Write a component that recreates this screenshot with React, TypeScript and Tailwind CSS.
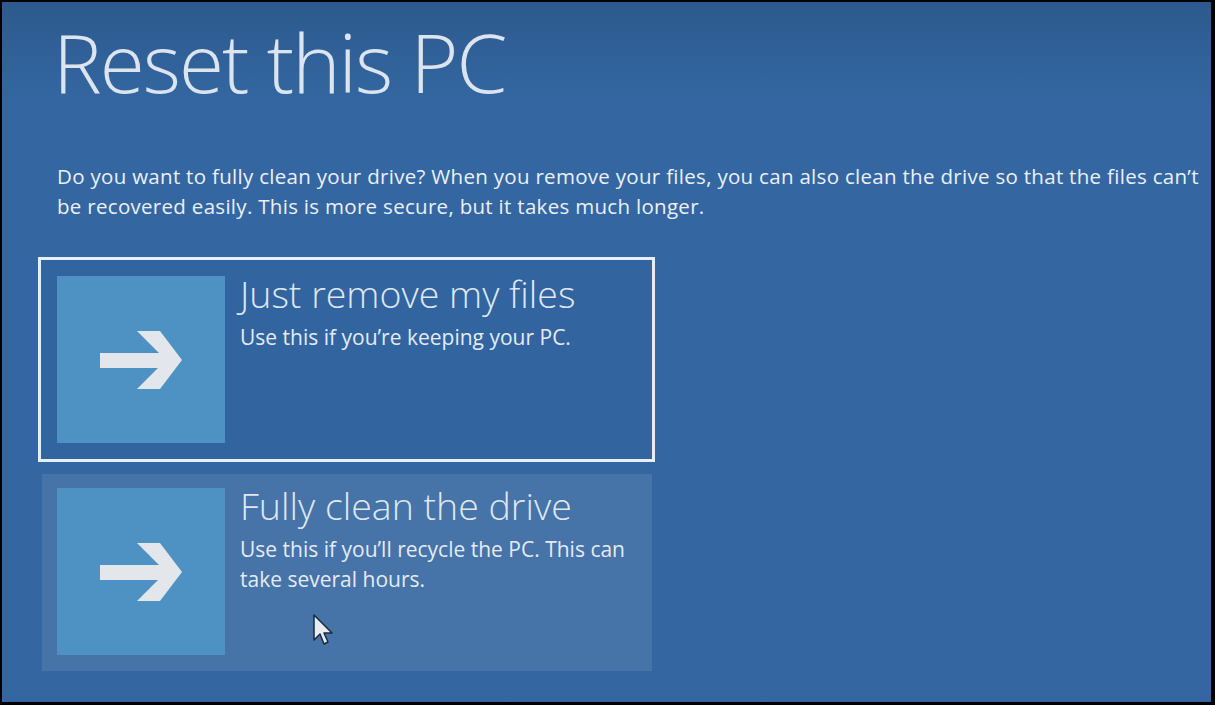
function Tile() {
  return (
    <div className="flex h-[167px] w-[168px] shrink-0 items-center justify-center bg-[#4e92c4]">
      <svg width="82" height="58" viewBox="0 0 82 58" fill="#e3e6eb">
        <path d="M0 22 H59 L37 0 H60 L82 29 L60 58 H37 L58 37 H0 Z" />
      </svg>
    </div>
  );
}

function Option({ title, desc, selected }: { title: string; desc: string; selected?: boolean }) {
  return (
    <div
      className={
        selected
          ? "flex w-[617px] gap-[15px] border-[3px] border-[#e8eef5] bg-[#3264a0] p-[16px]"
          : "ml-[4px] flex w-[610px] gap-[15px] bg-[#4673a8] px-[15px] pb-[16px] pt-[14px]"
      }
    >
      <Tile />
      <div className="mt-[-2px]">
        <div className="text-[37.5px] font-light leading-[40px] text-[#dfe7f0]">{title}</div>
        <div className="mt-[8px] w-[400px] text-[21px] leading-[30px] text-[#e3ebf3]">{desc}</div>
      </div>
    </div>
  );
}

export default function App() {
  return (
    <div className="h-[705px] w-[1215px] overflow-hidden bg-black pb-[3px] pl-[2px] pr-[4px] pt-[2px]" style={{ fontFamily: '"Open Sans", "Noto Sans", sans-serif' }}>
      <div className="relative h-full w-full bg-gradient-to-b from-[#2c5a8e] via-[#3467a2] via-[15%] to-[#3466a1]">
        <div className="pl-[51px] pt-[9px]">
          <h1 className="text-[82px] font-light leading-[100px] tracking-[-2px] text-[#dbe4ef]">Reset this PC</h1>
          <p className="mt-[50px] w-[1150px] pl-[4px] text-[20.5px] leading-[30px] tracking-[0.3px] text-[#eaf0f6]">
            Do you want to fully clean your drive? When you remove your files, you can also clean the drive so that the files can’t be recovered easily. This is more secure, but it takes much longer.
          </p>
        </div>
        <div className="mt-[36px] flex flex-col gap-[12px] pl-[36px]">
          <Option selected title="Just remove my files" desc="Use this if you’re keeping your PC." />
          <Option title="Fully clean the drive" desc="Use this if you’ll recycle the PC. This can take several hours." />
        </div>
        <svg className="absolute left-[311px] top-[612px]" width="22" height="34" viewBox="0 0 22 34">
          <path d="M1 1 V26 L7 20 L11 30 L15 28 L11 19 H19 Z" fill="#e8ecf0" stroke="#1a2a3e" strokeWidth="1.5" strokeLinejoin="round" />
        </svg>
      </div>
    </div>
  );
}
